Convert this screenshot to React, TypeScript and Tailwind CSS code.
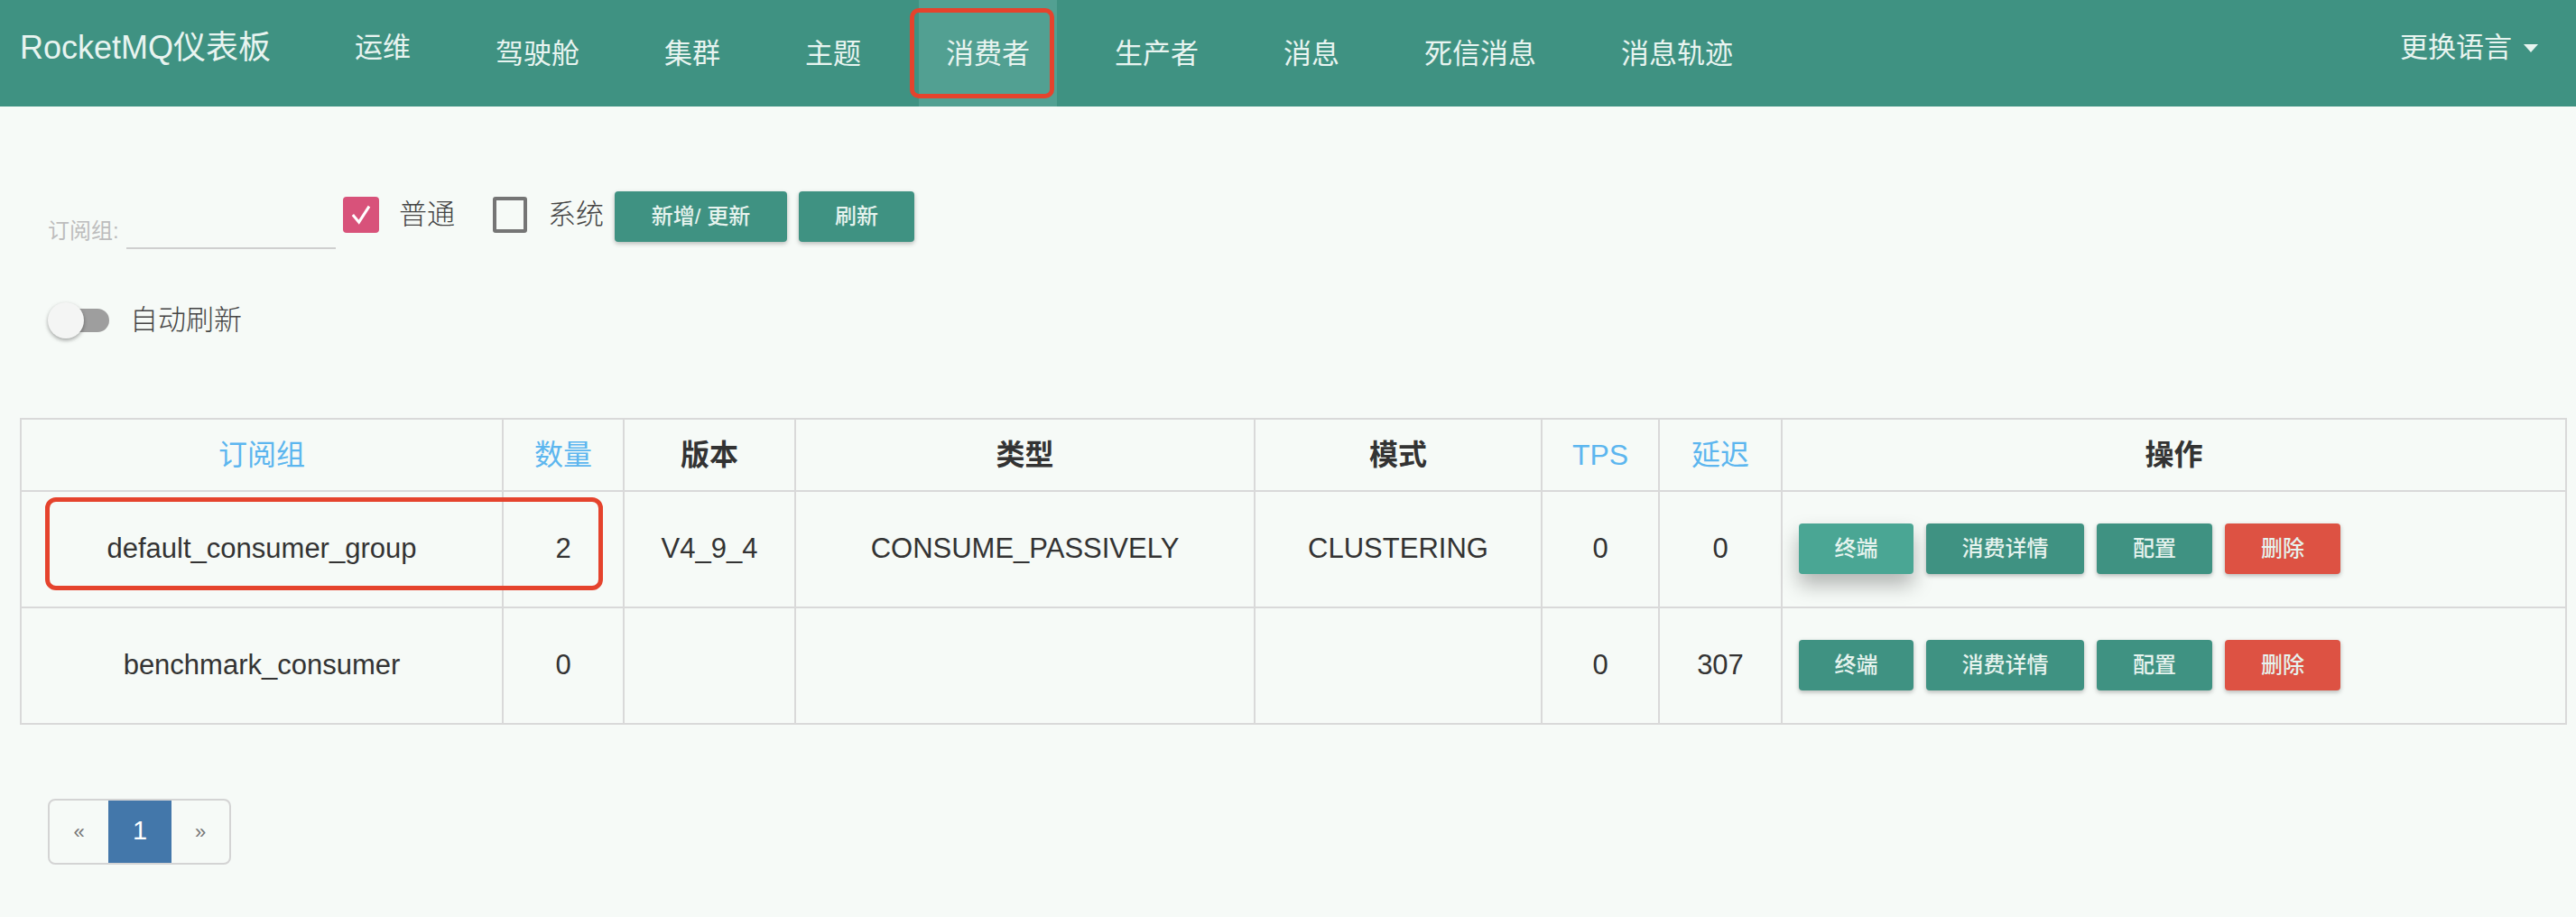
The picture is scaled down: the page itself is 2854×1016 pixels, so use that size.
import React from 'react';

const font = { fontFamily: '"Liberation Sans", "Noto Sans CJK SC", sans-serif' };

const navItems = ['运维', '驾驶舱', '集群', '主题', '消费者', '生产者', '消息', '死信消息', '消息轨迹'];

interface ConsumerRow {
  group: string;
  count: number;
  version: string;
  type: string;
  mode: string;
  tps: number;
  delay: number;
}

const rows: ConsumerRow[] = [
  { group: 'default_consumer_group', count: 2, version: 'V4_9_4', type: 'CONSUME_PASSIVELY', mode: 'CLUSTERING', tps: 0, delay: 0 },
  { group: 'benchmark_consumer', count: 0, version: '', type: '', mode: '', tps: 0, delay: 307 },
];

function ActionButton({ label, color = 'teal', hover = false, width }: { label: string; color?: 'teal' | 'red'; hover?: boolean; width: string }) {
  const bg = color === 'red' ? 'bg-[#dd5243]' : hover ? 'bg-[#4aa694]' : 'bg-[#3f9282]';
  const shadow = hover ? 'shadow-[0_12px_22px_rgba(0,0,0,0.28)]' : 'shadow-[0_2px_5px_rgba(0,0,0,0.26)]';
  return (
    <button className={`${bg} ${shadow} ${width} h-[56px] rounded-[4px] text-[24px] font-medium text-[#e6f3ee] flex items-center justify-center`}>
      {label}
    </button>
  );
}

export default function App() {
  return (
    <div className="min-h-screen w-[2854px] bg-[#f6faf7] text-[#333]" style={font}>
      {/* top nav */}
      <nav className="h-[118px] bg-[#3f9282] flex items-stretch pl-[22px] pr-[42px] text-[#e8f4f0]">
        <div className="flex items-center pb-[12px] text-[36px] mr-[63px]">RocketMQ仪表板</div>
        <div className="flex items-stretch gap-[34px]">
          {navItems.map((item, i) => (
            <div
              key={item}
              className={`relative flex items-center px-[30px] text-[31px] ${i === 0 ? 'pb-[12px]' : 'pt-[2px]'} ${item === '消费者' ? 'bg-[#52a092]' : ''}`}
            >
              {item}
              {item === '消费者' && (
                <div className="absolute left-[-10px] top-[9px] w-[160px] h-[100px] border-[5px] border-[#e5432d] rounded-[10px]" />
              )}
            </div>
          ))}
        </div>
        <div className="ml-auto flex items-center pb-[12px] text-[31px] gap-[13px]">
          更换语言
          <span className="inline-block w-0 h-0 border-l-[8px] border-r-[8px] border-t-[9px] border-l-transparent border-r-transparent border-t-[#e8f4f0]" />
        </div>
      </nav>

      {/* filters */}
      <div className="pl-[53px] pt-[94px] flex items-start">
        <div className="flex items-start mt-[32px]">
          <span className="text-[24px] leading-[24px] text-[#bdbdbd] w-[80px]">订阅组:</span>
          <div className="ml-[7px] w-[232px] h-[32px] border-b-2 border-[#cfcfcf]" />
        </div>
        <div className="ml-[8px] mt-[6px] w-[40px] h-[40px] rounded-[4px] bg-[#d8527a] flex items-center justify-center">
          <svg width="28" height="28" viewBox="0 0 24 24" fill="none" stroke="#ffffff" strokeWidth="2.6" strokeLinecap="square">
            <polyline points="5,13 10,19 19,5" />
          </svg>
        </div>
        <span className="ml-[22px] mt-[6px] leading-[40px] text-[31px] text-[#444] font-light">普通</span>
        <div className="ml-[42px] mt-[6px] w-[38px] h-[40px] rounded-[3px] border-[4px] border-[#757575]" />
        <span className="ml-[23px] mt-[6px] leading-[40px] text-[31px] text-[#444] font-light">系统</span>
        <button className="ml-[12px] w-[191px] h-[56px] rounded-[4px] bg-[#3f9282] text-[24px] font-medium text-[#e6f3ee] shadow-[0_2px_5px_rgba(0,0,0,0.26)]">
          新增/ 更新
        </button>
        <button className="ml-[13px] w-[128px] h-[56px] rounded-[4px] bg-[#3f9282] text-[24px] font-medium text-[#e6f3ee] shadow-[0_2px_5px_rgba(0,0,0,0.26)]">
          刷新
        </button>
      </div>

      {/* auto refresh toggle */}
      <div className="pl-[53px] mt-[56px] flex items-center">
        <div className="relative w-[68px] h-[42px] flex items-center">
          <div className="ml-[17px] w-[51px] h-[26px] rounded-full bg-[#9e9e9e]" />
          <div className="absolute left-0 top-[1px] w-[40px] h-[40px] rounded-full bg-[#f4f5f4] shadow-[0_2px_4px_rgba(0,0,0,0.35)]" />
        </div>
        <span className="ml-[23px] text-[31px] text-[#444] font-light">自动刷新</span>
      </div>

      {/* table */}
      <div className="relative ml-[22px] mt-[84px] w-[2822px]">
        <table className="w-full table-fixed border-collapse border-2 border-[#d9d9d9]">
          <colgroup>
            <col className="w-[534px]" />
            <col className="w-[134px]" />
            <col className="w-[190px]" />
            <col className="w-[509px]" />
            <col className="w-[318px]" />
            <col className="w-[130px]" />
            <col className="w-[136px]" />
            <col />
          </colgroup>
          <thead>
            <tr className="h-[80px] text-[32px]">
              <th className="border-2 border-[#d9d9d9] font-normal text-[#5cb6ef]">订阅组</th>
              <th className="border-2 border-[#d9d9d9] font-normal text-[#5cb6ef]">数量</th>
              <th className="border-2 border-[#d9d9d9] font-bold text-[#333]">版本</th>
              <th className="border-2 border-[#d9d9d9] font-bold text-[#333]">类型</th>
              <th className="border-2 border-[#d9d9d9] font-bold text-[#333]">模式</th>
              <th className="border-2 border-[#d9d9d9] font-normal text-[#5cb6ef]">TPS</th>
              <th className="border-2 border-[#d9d9d9] font-normal text-[#5cb6ef]">延迟</th>
              <th className="border-2 border-[#d9d9d9] font-bold text-[#333]">操作</th>
            </tr>
          </thead>
          <tbody>
            {rows.map((row, i) => (
              <tr key={row.group} className="h-[129px] text-[31px] text-center text-[#333]">
                <td className="border-2 border-[#d9d9d9]">{row.group}</td>
                <td className="border-2 border-[#d9d9d9]">{row.count}</td>
                <td className="border-2 border-[#d9d9d9]">{row.version}</td>
                <td className="border-2 border-[#d9d9d9]">{row.type}</td>
                <td className="border-2 border-[#d9d9d9]">{row.mode}</td>
                <td className="border-2 border-[#d9d9d9]">{row.tps}</td>
                <td className="border-2 border-[#d9d9d9]">{row.delay}</td>
                <td className="border-2 border-[#d9d9d9] pl-[18px]">
                  <div className="flex items-center gap-[14px]">
                    <ActionButton label="终端" hover={i === 0} width="w-[127px]" />
                    <ActionButton label="消费详情" width="w-[175px]" />
                    <ActionButton label="配置" width="w-[128px]" />
                    <ActionButton label="删除" color="red" width="w-[128px]" />
                  </div>
                </td>
              </tr>
            ))}
          </tbody>
        </table>
        <div className="absolute left-[28px] top-[88px] w-[618px] h-[103px] border-[5px] border-[#e5432d] rounded-[12px]" />
      </div>

      {/* pagination */}
      <div className="pl-[53px] mt-[82px] pb-[40px]">
        <div className="inline-flex h-[73px] border-2 border-[#d4d4d4] rounded-[8px] overflow-hidden">
          <div className="w-[65px] flex items-center justify-center text-[22px] text-[#777]">«</div>
          <div className="w-[70px] bg-[#4377aa] flex items-center justify-center text-[29px] text-white">1</div>
          <div className="w-[64px] flex items-center justify-center text-[22px] text-[#777]">»</div>
        </div>
      </div>
    </div>
  );
}
